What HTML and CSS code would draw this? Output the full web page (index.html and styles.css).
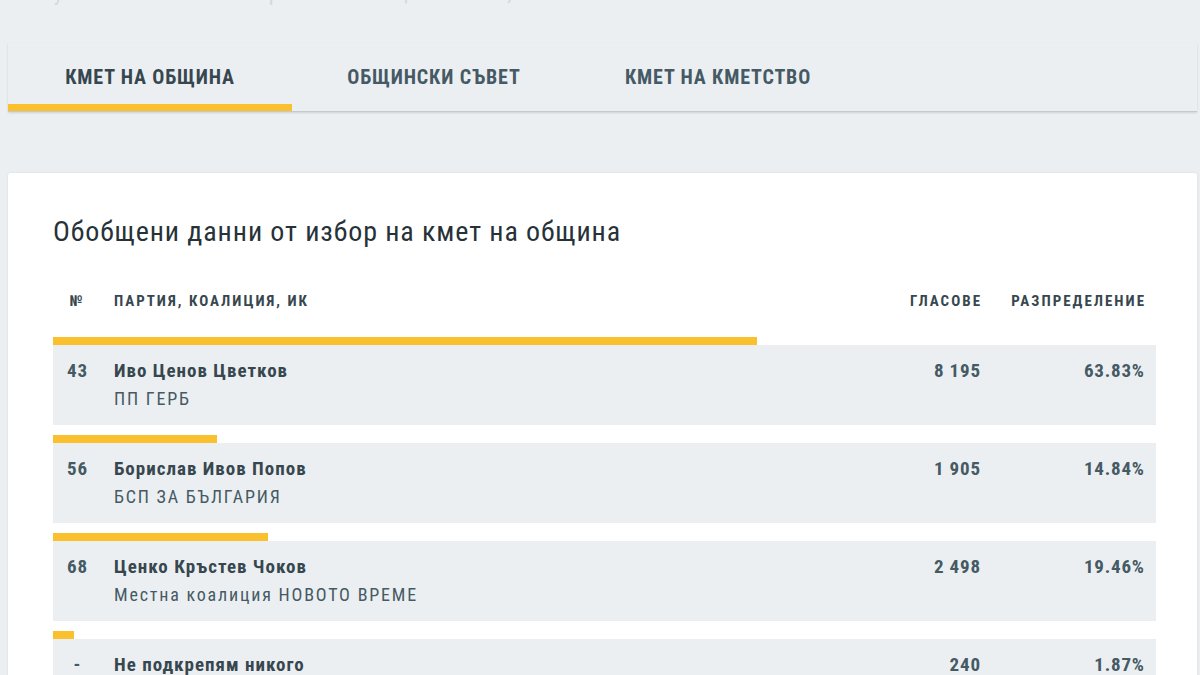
FILE: index.html
```html
<!DOCTYPE html>
<html lang="bg">
<head>
<meta charset="utf-8">
<title>Резултати</title>
<link rel="stylesheet" href="styles.css">
</head>
<body>
<div class="crumb"><span>Резултати от местни избори 2019 — община Ловеч, област Ловеч</span></div>

<nav class="tabs">
  <a class="tab active">КМЕТ НА ОБЩИНА</a>
  <a class="tab">ОБЩИНСКИ СЪВЕТ</a>
  <a class="tab">КМЕТ НА КМЕТСТВО</a>
</nav>

<section class="card">
  <h2 class="card-title">Обобщени данни от избор на кмет на община</h2>

  <div class="thead">
    <span class="c-num">№</span>
    <span class="c-name">ПАРТИЯ, КОАЛИЦИЯ, ИК</span>
    <span class="c-votes">ГЛАСОВЕ</span>
    <span class="c-pct">РАЗПРЕДЕЛЕНИЕ</span>
  </div>

  <div class="result">
    <div class="bar" style="width:63.83%"></div>
    <div class="row">
      <span class="c-num">43</span>
      <div class="c-name"><div class="who">Иво Ценов Цветков</div><div class="party">ПП ГЕРБ</div></div>
      <span class="c-votes">8 195</span>
      <span class="c-pct">63.83%</span>
    </div>
  </div>

  <div class="result">
    <div class="bar" style="width:14.84%"></div>
    <div class="row">
      <span class="c-num">56</span>
      <div class="c-name"><div class="who">Борислав Ивов Попов</div><div class="party">БСП ЗА БЪЛГАРИЯ</div></div>
      <span class="c-votes">1 905</span>
      <span class="c-pct">14.84%</span>
    </div>
  </div>

  <div class="result">
    <div class="bar" style="width:19.46%"></div>
    <div class="row">
      <span class="c-num">68</span>
      <div class="c-name"><div class="who">Ценко Кръстев Чоков</div><div class="party">Местна коалиция НОВОТО ВРЕМЕ</div></div>
      <span class="c-votes">2 498</span>
      <span class="c-pct">19.46%</span>
    </div>
  </div>

  <div class="result">
    <div class="bar" style="width:1.87%"></div>
    <div class="row">
      <span class="c-num">-</span>
      <div class="c-name"><div class="who">Не подкрепям никого</div><div class="party">&nbsp;</div></div>
      <span class="c-votes">240</span>
      <span class="c-pct">1.87%</span>
    </div>
  </div>
</section>
</body>
</html>
```

FILE: styles.css
```css
* { box-sizing: border-box; }

html, body {
  margin: 0;
  background: #eceff1;
  font-family: "Roboto Condensed", Roboto, "Liberation Sans", sans-serif;
  font-stretch: condensed;
  color: #37474f;
}

.crumb {
  height: 5px;
  overflow: hidden;
  display: flex;
  align-items: flex-end;
  padding-left: 20px;
  font-size: 22px;
  line-height: 24px;
  letter-spacing: 0.5px;
  color: #d3d9dd;
}

/* tabs */
.tabs {
  display: flex;
  margin: 38px 3px 0 8px;
  border-bottom: 1px solid #c3c9cd;
  box-shadow: 0 1px 2px rgba(0, 0, 0, 0.12);
}

.tab {
  width: 284px;
  padding: 24px 0 17px;
  border-bottom: 7px solid transparent;
  text-align: center;
  font-size: 20px;
  line-height: 20px;
  font-weight: 700;
  letter-spacing: 0.85px;
  color: #455a64;
  cursor: pointer;
}

.tab.active {
  border-bottom-color: #fbc02d;
  color: #37474f;
}

/* card */
.card {
  margin: 61px 3px 0 8px;
  padding: 43px 41px 40px 45px;
  background: #fff;
  border-radius: 3px;
  box-shadow: 0 0 3px rgba(0, 0, 0, 0.08);
}

.card-title {
  margin: 0;
  font-size: 28px;
  line-height: 32px;
  font-weight: 400;
  letter-spacing: 0.9px;
  color: #263238;
}

.thead,
.row {
  display: grid;
  grid-template-columns: 48px 1fr 150px 164px;
  padding-right: 12px;
}

.thead {
  margin-top: 43px;
  margin-bottom: 26px;
  font-size: 15px;
  line-height: 20px;
  font-weight: 700;
  letter-spacing: 2px;
  color: #37474f;
}

.thead .c-votes,
.thead .c-pct { margin-right: -2px; }

.c-num { text-align: center; }
.c-name { padding-left: 13px; }
.c-votes, .c-pct { text-align: right; }

.result { margin-bottom: 10px; }

.bar {
  height: 8px;
  background: #fbc02d;
}

.row {
  height: 80px;
  padding-top: 16px;
  background: #eceff1;
  font-size: 19px;
  line-height: 20px;
}

.row .c-num,
.row .c-votes,
.row .c-pct {
  font-weight: 700;
  color: #455a64;
  letter-spacing: 0.8px;
  margin-right: -0.8px;
}

.who {
  font-weight: 700;
  letter-spacing: 1px;
  color: #37474f;
}

.party {
  margin-top: 8px;
  font-size: 18px;
  letter-spacing: 1.8px;
  color: #455a64;
}
```
